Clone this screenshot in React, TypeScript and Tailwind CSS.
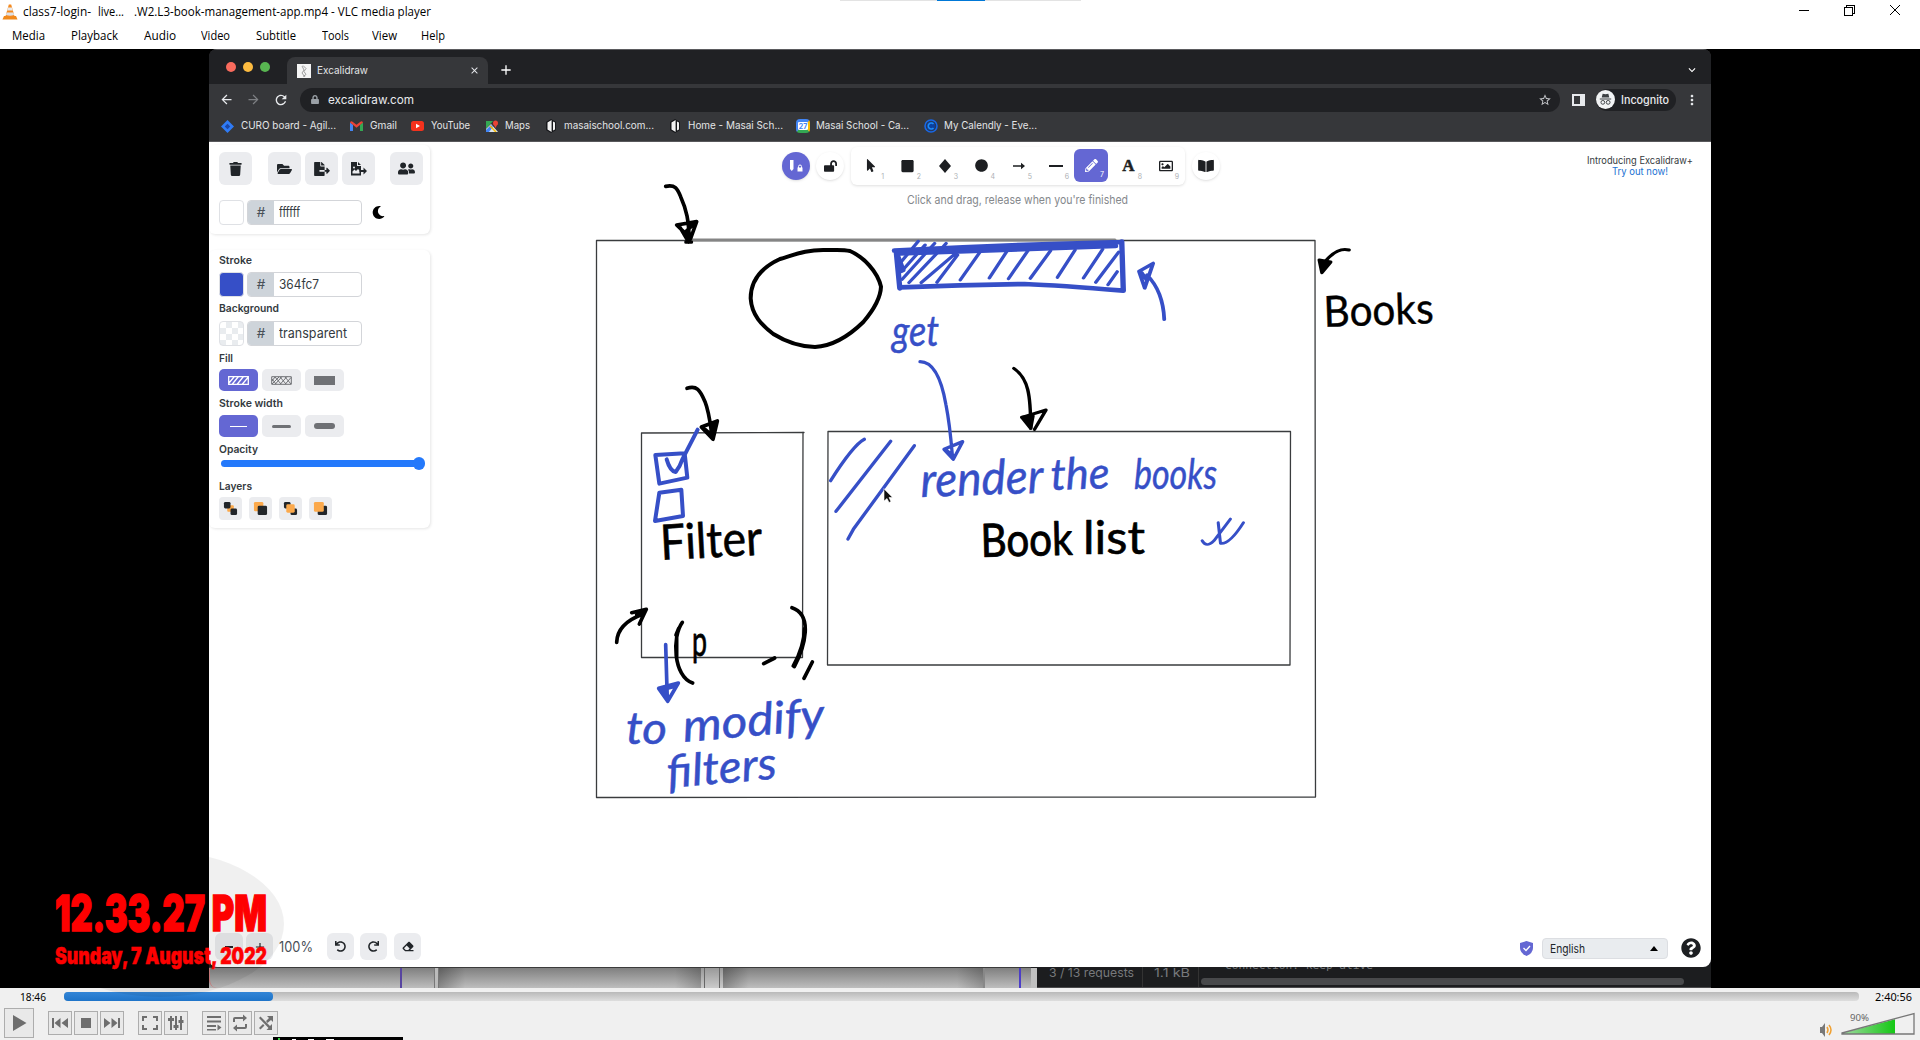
import { useLayoutEffect, useRef, useState, type ReactNode } from "react";
import {
  FaTrash, FaFolderOpen, FaFileExport, FaUserFriends, FaMoon, FaMousePointer, FaSquare, FaCircle,
  FaPencilAlt, FaBookOpen, FaUndo, FaRedo, FaEraser, FaQuestionCircle, FaLock, FaLockOpen, FaRegImage,
} from "react-icons/fa";
import {
  MdArrowBack, MdArrowForward, MdRefresh, MdClose, MdAdd, MdStarBorder, MdExpandMore, MdMoreVert,
} from "react-icons/md";

/* Text squeezed or stretched horizontally so that it fills its box. */
function Fit({ className, children }: { className: string; children: ReactNode }) {
  const box = useRef<HTMLSpanElement>(null);
  const text = useRef<HTMLSpanElement>(null);
  const [scale, setScale] = useState(1);
  useLayoutEffect(() => {
    if (box.current && text.current && text.current.offsetWidth > 0) {
      setScale(box.current.clientWidth / text.current.getBoundingClientRect().width);
    }
  }, []);
  return (
    <span ref={box} className={`block shrink-0 ${className}`}>
      <span ref={text} className="inline-block origin-left whitespace-pre" style={{ transform: `scaleX(${scale})` }}>
        {children}
      </span>
    </span>
  );
}

function Cone() {
  return (
    <svg viewBox="0 0 16 16" className="ml-[2px] h-4 w-4 shrink-0">
      <path d="M2 12h12l1.5 3.5H.5z" fill="#f08a1c" />
      <path d="M6.8.5h2.4l3.3 11.8q-4.5 2-9 0z" fill="#f58a1f" />
      <path d="M6 3.4h4l.8 3H5.200z" fill="#e8eaed" />
      <path d="M4.600 8.500h6.800l.7 2.500q-4 1.500-8.200 0z" fill="#dfe1e5" />
    </svg>
  );
}

function TitleBar() {
  return (
    <header className="relative flex h-6 items-center bg-white text-[12px] leading-4 text-black">
      <Cone />
      <Fit className="ml-[5px] w-[68px]">class7-login-</Fit>
      <Fit className="ml-[7px] w-[26px]">live...</Fit>
      <Fit className="ml-[10px] w-[297px]">.W2.L3-book-management-app.mp4 - VLC media player</Fit>
      <div className="absolute left-[840px] top-0 flex h-px w-[241px] justify-center bg-[#e3e3e3]">
        <div className="h-px w-12 bg-[#0078d7]" />
      </div>
      <svg viewBox="0 0 102 12" className="mb-1 ml-auto mr-[19px] h-3 w-[102px]" fill="none" stroke="#000" shapeRendering="crispEdges">
        <path d="M0 6.5h10M45.500 3.500h8v8h-8zM47.500 3.500v-2h8v8h-2" />
        <path d="M91 1l10 10M101 1l-10 10" shapeRendering="auto" />
      </svg>
    </header>
  );
}

function MenuBar() {
  return (
    <nav className="flex h-[25px] items-center bg-white pb-px pl-3 text-[12px] leading-4 text-black">
      <Fit className="w-[33px]">Media</Fit>
      <Fit className="ml-[26px] w-[47px]">Playback</Fit>
      <Fit className="ml-[26px] w-8">Audio</Fit>
      <Fit className="ml-[25px] w-[29px]">Video</Fit>
      <Fit className="ml-[26px] w-10">Subtitle</Fit>
      <Fit className="ml-[26px] w-[27px]">Tools</Fit>
      <Fit className="ml-[23px] w-[25px]">View</Fit>
      <Fit className="ml-6 w-6">Help</Fit>
    </nav>
  );
}

function TabStrip() {
  return (
    <div className="flex h-[35px] items-end border-t border-[#5b5b5e] bg-[#202124] pl-[17px]">
      <div className="mb-3 flex gap-[7px]">
        <i className="h-[10px] w-[10px] rounded-full bg-[#f96b5d]" />
        <i className="h-[10px] w-[10px] rounded-full bg-[#fcbb40]" />
        <i className="h-[10px] w-[10px] rounded-full bg-[#58b551]" />
      </div>
      <div className="ml-[17px] flex h-[27px] w-[201px] items-center rounded-t-lg bg-[#36373a] pl-[10px]">
        <svg viewBox="0 0 14 14" className="h-[14px] w-[14px]">
          <path d="M0 0h14v14H0z" fill="#f5f5f5" />
          <path d="M6 1.500l3 3-2 3 2 3-3 2M5 2l2 4-2 3 3 4" fill="none" stroke="#8a8a8a" strokeWidth=".8" />
        </svg>
        <Fit className="ml-[6px] w-[51px] text-[10.5px] leading-4 text-[#e4e5e7]">Excalidraw</Fit>
        <MdClose className="ml-auto mr-[8px] h-[11px] w-[11px] text-[#e8eaed]" />
      </div>
      <MdAdd className="mb-[6px] ml-[10px] h-4 w-4 text-white" />
      <MdExpandMore className="mb-[7px] ml-auto mr-[12px] h-[14px] w-[14px] text-white" />
    </div>
  );
}

function AddressBar() {
  return (
    <div className="flex h-[31px] items-center pl-[10px] text-[#e8eaed]">
      <MdArrowBack className="h-[15px] w-[15px]" />
      <MdArrowForward className="ml-3 h-[15px] w-[15px] text-[#7d7f83]" />
      <MdRefresh className="ml-3 h-4 w-4" />
      <div className="ml-[11px] flex h-6 w-[1260px] items-center rounded-full bg-[#202124] pl-[11px]">
        <FaLock className="h-[9px] w-[8px] text-[#9aa0a6]" />
        <Fit className="ml-[9px] w-[86px] text-[12px] leading-4">excalidraw.com</Fit>
        <MdStarBorder className="ml-auto mr-[8px] h-[14px] w-[14px] text-[#c4c6ca]" />
      </div>
      <div className="ml-3 flex h-3 w-[13px] justify-end border-2 border-[#e8eaed]">
        <i className="w-[3px] bg-[#e8eaed]" />
      </div>
      <div className="ml-[11px] flex h-[22px] w-[80px] items-center rounded-full bg-[#202124]">
        <svg viewBox="0 0 20 20" className="h-[19px] w-[19px]">
          <circle cx="10" cy="10" r="10" fill="#f1f3f4" />
          <path d="M4 9h12v1H4zM6 8l1-4 3 .6L13 4l1 4z" fill="#3c4043" />
          <g fill="none" stroke="#3c4043"><circle cx="7.200" cy="13" r="2" /><circle cx="12.800" cy="13" r="2" /></g>
        </svg>
        <Fit className="ml-[6px] w-12 text-[11.5px] font-medium leading-4">Incognito</Fit>
      </div>
      <MdMoreVert className="ml-[8px] h-4 w-4" />
    </div>
  );
}

function Masai() {
  return (
    <svg viewBox="0 0 10 14" className="h-[14px] w-[10px]">
      <path d="M5 0l5 3v8l-5 3-5-3V3z" fill="#16171a" />
      <path d="M5.600 1v12L1.500 10.600V3.400zM7 2.500l2 1.100v6.800L7 11.500z" fill="#f1f1f1" />
    </svg>
  );
}

function Bookmarks() {
  return (
    <div className="flex h-[27px] items-center border-b border-[#58585b] pb-1 pl-[12px] text-[10.5px] leading-4 text-[#e4e5e7]">
      <svg viewBox="0 0 12 12" className="h-[13px] w-[13px]">
        <path d="M6 0l6 6-6 6-6-6z" fill="#2f7bf6" /><path d="M6 3.500L8.500 6 6 8.500 3.500 6z" fill="#1a47a8" />
      </svg>
      <Fit className="ml-[7px] w-[95px]">CURO board - Agil...</Fit>
      <svg viewBox="0 0 13 10" className="ml-[14px] h-[10px] w-[13px]">
        <path d="M0 10V1.500L3 3.800V10z" fill="#4385f3" /><path d="M13 10V1.500L10 3.800V10z" fill="#34a853" />
        <path d="M0 1.500Q1-.5 2.600.700L6.500 3.700 10.400.700Q12-.5 13 1.500L6.500 6.700z" fill="#ea4335" />
      </svg>
      <Fit className="ml-[7px] w-[27px]">Gmail</Fit>
      <svg viewBox="0 0 13 10" className="ml-[14px] h-[10px] w-[13px]">
        <rect width="13" height="10" rx="2.500" fill="#f4321d" /><path d="M5 2.800l4 2.200-4 2.200z" fill="#fff" />
      </svg>
      <Fit className="ml-[7px] w-[39px]">YouTube</Fit>
      <svg viewBox="0 0 12 12" className="ml-[16px] h-3 w-3">
        <path d="M0 1h7L0 9z" fill="#34a853" /><path d="M0 9l5-5 7 8H1z" fill="#dfe6ee" /><path d="M0 10l5-5 2 2-4 5H0z" fill="#4285f4" />
        <path d="M4 6l6 6" stroke="#fbbc04" strokeWidth="1.500" /><circle cx="9.500" cy="3" r="2.500" fill="#ea4335" /><path d="M7.500 4h4l-2 4z" fill="#ea4335" />
      </svg>
      <Fit className="ml-[7px] w-[25px]">Maps</Fit>
      <span className="ml-[16px]"><Masai /></span>
      <Fit className="ml-[8px] w-[90px]">masaischool.com...</Fit>
      <span className="ml-[16px]"><Masai /></span>
      <Fit className="ml-[8px] w-[95px]">Home - Masai Sch...</Fit>
      <span className="ml-[13px] flex h-[14px] w-[14px] shrink-0 items-center justify-center rounded-sm border-x-2 border-b-[3px] border-t-[3px] border-b-[#34a853] border-l-[#4285f4] border-r-[#fbbc04] border-t-[#4285f4] bg-white text-[7px] font-bold leading-none text-[#4285f4]">27</span>
      <Fit className="ml-[6px] w-[93px]">Masai School - Ca...</Fit>
      <svg viewBox="0 0 14 14" className="ml-[15px] h-[14px] w-[14px]" fill="none">
        <circle cx="7" cy="7" r="6" stroke="#1767e8" strokeWidth="1.600" /><circle cx="7" cy="7" r="4.500" fill="#0b3f9e" />
        <path d="M9.500 5a3 3 0 1 0 0 4" stroke="#1d8cf5" strokeWidth="1.500" />
      </svg>
      <Fit className="ml-[6px] w-[93px]">My Calendly - Eve...</Fit>
    </div>
  );
}

function PanelButton({ className, children }: { className: string; children: ReactNode }) {
  return <div className={`flex shrink-0 items-center justify-center bg-[#ebecef] text-[#212529] ${className}`}>{children}</div>;
}

function HexInput({ swatch, value, width }: { swatch: string; value: string; width: string }) {
  return (
    <div className="flex h-[25px] text-[13.5px] leading-[23px]">
      <div className={`h-[25px] w-[25px] rounded border border-[#dfe1e5] ${swatch}`} />
      <div className="ml-[3px] flex w-[115px] overflow-hidden rounded border border-[#d3d5d9]">
        <span className="w-[26px] bg-[#ced4da] text-center text-[#495057]">#</span>
        <Fit className={`ml-[5px] text-[#343a40] ${width}`}>{value}</Fit>
      </div>
    </div>
  );
}

function Layer({ kind }: { kind: number }) {
  return (
    <PanelButton className="h-[23px] w-[23px] rounded">
      <svg viewBox="0 0 16 16" className="h-[15px] w-[15px]">
        {kind === 0 && <><rect x="4.500" y="4.500" width="7" height="7" rx="1" fill="#fba94c" /><rect x="1" y="1" width="7" height="7" rx="1.500" fill="#212529" /><rect x="8" y="8" width="7" height="7" rx="1.500" fill="#212529" /></>}
        {kind === 1 && <><rect x="1" y="1" width="10" height="10" rx="1.500" fill="#fba94c" /><rect x="5" y="5" width="10" height="10" rx="1.500" fill="#212529" /></>}
        {kind === 2 && <><rect x="1" y="1" width="7" height="7" rx="1.500" fill="#212529" /><rect x="8" y="8" width="7" height="7" rx="1.500" fill="#212529" /><rect x="3.500" y="3.500" width="9" height="9" rx="1.500" fill="#fba94c" /></>}
        {kind === 3 && <><rect x="5" y="5" width="10" height="10" rx="1.500" fill="#212529" /><rect x="1" y="1" width="10.500" height="10.500" rx="1.500" fill="#fba94c" /></>}
      </svg>
    </PanelButton>
  );
}

function LeftPanels() {
  return (
    <aside className="w-[221px] pt-[3px] text-[10.5px] font-semibold leading-[14px] text-[#343a40]">
      <section className="h-[89px] rounded-md bg-white pl-[10px] pt-[7px] shadow-[1px_1px_3px_rgba(0,0,0,0.1)]">
        <div className="flex">
          <PanelButton className="h-[33px] w-[33px] rounded-md"><FaTrash className="h-[14px] w-[13px]" /></PanelButton>
          <PanelButton className="ml-4 h-[33px] w-[33px] rounded-md"><FaFolderOpen className="h-[14px] w-[15px]" /></PanelButton>
          <PanelButton className="ml-1 h-[33px] w-[33px] rounded-md"><FaFileExport className="h-[14px] w-4" /></PanelButton>
          <PanelButton className="ml-1 h-[33px] w-[33px] rounded-md">
            <svg viewBox="0 0 16 14" className="h-[14px] w-4">
              <path d="M0 0h6v4h4v9.500H0zM7 0l3 3H7z" fill="#212529" />
              <path d="M1.500 11.500v-2l2-2 1.500 1.500 2-2 1.500 1.500v3z" fill="#ebecef" /><circle cx="3" cy="5.500" r="1" fill="#ebecef" />
              <path d="M8.500 8h4V5.500L16 9l-3.500 3.500V10h-4z" fill="#212529" />
            </svg>
          </PanelButton>
          <PanelButton className="ml-[15px] h-[33px] w-[33px] rounded-md"><FaUserFriends className="h-[15px] w-[17px]" /></PanelButton>
        </div>
        <div className="mt-[15px] flex items-center font-normal">
          <HexInput swatch="bg-white" value="ffffff" width="w-[21px]" />
          <FaMoon className="ml-[10px] h-[13px] w-[13px] text-black" />
        </div>
      </section>
      <section className="mt-4 h-[278px] rounded-md bg-white pl-[10px] pt-[4px] shadow-[1px_1px_3px_rgba(0,0,0,0.1)]">
        <Fit className="w-[33px]">Stroke</Fit>
        <div className="mt-[4px] font-normal"><HexInput swatch="bg-[#364fc7]" value="364fc7" width="w-[40px]" /></div>
        <Fit className="mt-[5px] w-[60px]">Background</Fit>
        <div className="mt-[5px] font-normal">
          <HexInput swatch="bg-[repeating-conic-gradient(#e9ecef_0_25%,#fff_0_50%)] bg-[length:12px_12px]" value="transparent" width="w-[68px]" />
        </div>
        <Fit className="mt-[6px] w-[14px]">Fill</Fit>
        <div className="mt-[3px] flex gap-1">
          <div className="flex h-[22px] w-[39px] items-center justify-center rounded-[5px] bg-[#6467d3]">
            <svg viewBox="0 0 21 9" className="h-[9px] w-[21px]" fill="none" stroke="#fff" strokeWidth="1.300"><path d="M.7.700h19.600v7.600H.7zM1 7l5-6M4 8.500l6.500-8M9 8.500l6.500-8M14 8.500l6-7" /></svg>
          </div>
          <PanelButton className="h-[22px] w-[39px] rounded-[5px]">
            <svg viewBox="0 0 21 9" className="h-[9px] w-[21px]" fill="none" stroke="#6f7175" strokeWidth="1"><path d="M.7.700h19.600v7.600H.7zM1 5l3-4M1 8l7-7M4 8.500l7-8M9 8.500l7-8M14 8.500l6-7M1 3l4 5M4 1l6 7M9 1l6 7M14 1l6 7" /></svg>
          </PanelButton>
          <PanelButton className="h-[22px] w-[39px] rounded-[5px]"><i className="h-[9px] w-[21px] bg-[#6f7175]" /></PanelButton>
        </div>
        <Fit className="mt-[6px] w-16">Stroke width</Fit>
        <div className="mt-1 flex gap-1">
          <div className="flex h-[22px] w-[39px] items-center justify-center rounded-[5px] bg-[#6467d3]"><i className="h-px w-[17px] bg-white" /></div>
          <PanelButton className="h-[22px] w-[39px] rounded-[5px]"><i className="h-[3px] w-[19px] rounded bg-[#6f7175]" /></PanelButton>
          <PanelButton className="h-[22px] w-[39px] rounded-[5px]"><i className="h-[6px] w-[21px] rounded bg-[#6f7175]" /></PanelButton>
        </div>
        <Fit className="mt-[6px] w-[39px]">Opacity</Fit>
        <div className="ml-[2px] flex h-[13px] w-[204px] items-center">
          <i className="h-[7px] flex-1 rounded-l-full bg-[#2479fb]" />
          <i className="-ml-px h-[13px] w-3 rounded-full bg-[#2479fb]" />
        </div>
        <Fit className="mt-[10px] w-[33px]">Layers</Fit>
        <div className="mt-[3px] flex gap-[7px]">
          <Layer kind={0} /><Layer kind={1} /><Layer kind={2} /><Layer kind={3} />
        </div>
      </section>
    </aside>
  );
}

function Tool({ n, children }: { n: string; children: ReactNode }) {
  return (
    <div className="relative flex h-[33px] w-[37px] shrink-0 items-center justify-center text-[#1d1f22]">
      {children}
      <span className="absolute bottom-[2px] right-[5px] text-[7px] leading-none text-[#adb0b5]">{n}</span>
    </div>
  );
}

function ToolBar() {
  return (
    <div className="absolute left-[573px] top-[4px] z-10 flex h-10 items-center">
      <div className="flex h-7 w-7 items-center justify-center rounded-full bg-[#6467d3] text-white shadow">
        <svg viewBox="0 0 16 14" className="h-[14px] w-4" fill="#fff">
          <path d="M2 1h3.500v9L3.750 12 2 10zM9.500 8.500h5v4h-5z" /><path d="M10.500 9V7.500a1.500 1.500 0 0 1 3 0V9" fill="none" stroke="#fff" />
        </svg>
      </div>
      <div className="ml-[6px] flex h-7 w-7 items-center justify-center rounded-full bg-white text-[#1d1f22] shadow-sm">
        <FaLockOpen className="h-3 w-[13px]" />
      </div>
      <div className="mb-px ml-[7px] flex h-[38px] w-[334px] items-center rounded-md bg-white pl-px shadow-[0_1px_3px_rgba(0,0,0,0.13)]">
        <Tool n="1"><FaMousePointer className="h-[13px] w-[10px]" /></Tool>
        <Tool n="2"><FaSquare className="h-[14px] w-[13px]" /></Tool>
        <Tool n="3"><svg viewBox="0 0 12 14" className="h-[14px] w-3"><path d="M6 0l6 7-6 7-6-7z" fill="#1d1f22" /></svg></Tool>
        <Tool n="4"><FaCircle className="h-[13px] w-[13px]" /></Tool>
        <Tool n="5"><svg viewBox="0 0 12 8" className="h-2 w-3"><path d="M0 3.300h8V.8L12 4 8 7.200V4.700H0z" fill="#1d1f22" /></svg></Tool>
        <Tool n="6"><i className="h-[2px] w-[14px] bg-[#1d1f22]" /></Tool>
        <div className="relative mr-[2px] flex h-[33px] w-[34px] shrink-0 items-center justify-center rounded-md bg-[#6467d3] text-white">
          <FaPencilAlt className="h-[13px] w-[13px]" />
          <span className="absolute bottom-[4px] right-1 text-[7px] leading-none">7</span>
        </div>
        <Tool n="8"><span className="font-['Liberation_Serif'] text-[17px] font-bold leading-none [-webkit-text-stroke:0.5px_#1d1f22]">A</span></Tool>
        <Tool n="9"><FaRegImage className="h-[14px] w-[14px]" /></Tool>
      </div>
      <div className="ml-[7px] flex h-7 w-7 items-center justify-center rounded-full bg-white text-[#1d1f22] shadow-sm">
        <FaBookOpen className="h-[14px] w-4" />
      </div>
    </div>
  );
}

function Whiteboard() {
  return (
    <svg viewBox="209 142 1502 825" className="absolute inset-0 h-[825px] w-[1502px]" fill="none" strokeLinecap="round" strokeLinejoin="round">
      {/* wireframe boxes */}
      <g stroke="#3a3c3e" strokeWidth="1.300">
        <path d="M596.500 240.500L1315 240.500L1315.500 797L596.500 797.500Z" />
        <path d="M641.500 433L804 432.500M803 432.500L802.500 657.500L641.500 657.500L641.500 433" />
        <path d="M828 431.500L1290.500 431.500L1290 665L827.500 665Z" />
      </g>
      <path d="M690 240L1115 240" stroke="#858585" strokeWidth="3" />

      {/* logo circle, upper left arrows and checkboxes */}
      <g transform="translate(580 170) scale(.33333)" stroke="#000" strokeWidth="12">
        <path d="M735 240C680 239 650 252 600 267C550 290 512 325 512 385C515 435 545 465 580 492C625 520 665 530 705 531C760 528 810 495 850 456C885 415 902 380 903 350C893 305 850 260 810 243C785 237 755 241 735 240Z" />
        <path d="M257 49C285 43 292 55 302 80C320 120 326 150 328 212M290 165L350 155L332 205ZM300 172L326 216M338 165L318 185M318 216H334" strokeWidth="11" />
        <path d="M321 655C350 645 360 660 375 695C388 728 390 755 397 805M364 771L412 753L399 808ZM375 778L397 797L402 765" strokeWidth="11" />
        <g stroke="#364fc7" strokeWidth="12">
          <path d="M226 855L314 850L322 923L238 941ZM260 868Q270 903 287 906Q300 890 307 868L353 779" />
          <path d="M238 968L304 959L309 1038L225 1053ZM304 959L309 1038" />
          <path d="M853 808Q820 825 752 932M932 814L768 1024M1003 827L820 1078L804 1107" strokeWidth="10" />
          <path d="M1020 575C1060 575 1085 630 1098 705C1110 765 1114 820 1118 866M1092 838L1148 815L1120 868ZM1100 842L1122 858" strokeWidth="10" />
        </g>
      </g>
      <path d="M884 489v12l3-2.500 2 4 2-1-2-4h3.500z" fill="#111" stroke="#fff" strokeWidth=".6" />

      {/* search bar with hatching */}
      <g transform="translate(860 220) scale(.3827 .33333)" stroke="#364fc7" strokeWidth="14">
        <path d="M105 202Q270 194 430 192Q520 196 688 212L684 65M95 98L104 205M99 110L112 150M90 92Q380 74 684 66M105 100Q380 88 668 78" />
        <path d="M108 125L152 64M108 155L170 75M110 178L195 70M128 188L205 95M160 188L255 95M201 187L255 105M262 180L316 92M338 174L386 90M388 176L440 90M445 175L498 92M516 172L562 90M584 174L634 88M616 187L676 96M648 194L672 155M225 70L210 90" strokeWidth="9" />
        <path d="M795 298C793 245 780 200 750 165M729 154L766 130L744 204ZM736 158L750 182" strokeWidth="10" />
        <path d="M894 962Q905 985 925 962L968 897M936 908Q940 950 942 970Q965 975 1002 908" strokeWidth="8" />
      </g>
      <g transform="translate(860 220) scale(.3827 .33333)" stroke="#000" strokeWidth="9">
        <path d="M1278 90Q1248 80 1215 125" />
        <path d="M1200 120L1230 126L1207 158Z" fill="#000" />
        <path d="M402 445C440 475 446 525 446 625M423 592L486 570L456 628" />
        <path d="M423 592L452 588L446 625Z" fill="#000" />
      </g>

      {/* lower left marks */}
      <g transform="translate(580 500) scale(.33333)" stroke="#000" strokeWidth="11">
        <path d="M110 427Q112 370 190 342M155 338L199 328L178 372M170 345L190 335" />
        <path d="M307 367C275 410 280 530 338 549M288 405L296 385M290 400V470" />
        <path d="M636 323C700 345 675 440 643 500M674 385Q672 440 640 498M551 491L584 474M697 486L672 535" />
        <path d="M257 434L262 600M236 565L295 549L263 604ZM245 570L265 590M250 568L280 560" stroke="#364fc7" />
      </g>

      {/* handwritten labels */}
      <g fontFamily="Lato, sans-serif" fontWeight="400" fill="#000" stroke="#000" strokeWidth=".4">
        <text x="1324" y="327" fontSize="43" textLength="110" lengthAdjust="spacingAndGlyphs" transform="rotate(-2 1324 327)">Books</text>
        <text x="981" y="557" fontSize="46" textLength="92" lengthAdjust="spacingAndGlyphs" transform="rotate(-1.500 981 557)" strokeWidth=".9">Book</text>
        <text x="1083" y="554" fontSize="46" textLength="62" lengthAdjust="spacingAndGlyphs" strokeWidth=".6">list</text>
        <text x="661" y="560" fontSize="49" textLength="102" lengthAdjust="spacingAndGlyphs" transform="rotate(-3 661 560)" strokeWidth=".6">Filter</text>
        <text x="692" y="656" fontSize="43" textLength="15" lengthAdjust="spacingAndGlyphs" strokeWidth=".8">p</text>
      </g>
      <g fontFamily="Lato, sans-serif" fontStyle="italic" fontWeight="400" fill="#364fc7" stroke="#364fc7" strokeWidth=".5">
        <text x="892" y="346" fontSize="43" textLength="47" lengthAdjust="spacingAndGlyphs">get</text>
        <text x="921" y="497" fontSize="48" textLength="123" lengthAdjust="spacingAndGlyphs" transform="rotate(-2 921 497)">render</text>
        <text x="1051" y="490" fontSize="44" textLength="59" lengthAdjust="spacingAndGlyphs" transform="rotate(-2 1051 490)">the</text>
        <text x="1134" y="489" fontSize="42" textLength="83" lengthAdjust="spacingAndGlyphs">books</text>
        <text x="626" y="744" fontSize="44" textLength="41" lengthAdjust="spacingAndGlyphs">to</text>
        <text x="684" y="742" fontSize="45" textLength="142" lengthAdjust="spacingAndGlyphs" transform="rotate(-5 684 742)">modify</text>
        <text x="668" y="788" fontSize="45" textLength="110" lengthAdjust="spacingAndGlyphs" transform="rotate(-5 668 788)">filters</text>
      </g>
    </svg>
  );
}

function CanvasFooter() {
  return (
    <div className="absolute bottom-0 left-0 flex h-[34px] w-full items-start pl-[6px]">
      <PanelButton className="h-[27px] w-7 rounded-md"><i className="h-[2px] w-2 bg-[#212529]" /></PanelButton>
      <PanelButton className="ml-[3px] h-[27px] w-[27px] rounded-md"><MdAdd className="h-[14px] w-[14px]" /></PanelButton>
      <Fit className="ml-[6px] w-[34px] text-[14px] leading-[27px] text-[#495057]">100%</Fit>
      <PanelButton className="ml-[14px] h-[27px] w-[27px] rounded-md"><FaUndo className="h-[11px] w-[11px]" /></PanelButton>
      <PanelButton className="ml-[6px] h-[27px] w-[27px] rounded-md"><FaRedo className="h-[11px] w-[11px]" /></PanelButton>
      <PanelButton className="ml-[7px] h-[27px] w-[27px] rounded-md"><FaEraser className="h-[11px] w-[12px]" /></PanelButton>
      <svg viewBox="0 0 13 15" className="ml-auto mt-[8px] h-[15px] w-[13px]">
        <path d="M6.500 0L13 2v5q0 5-6.500 8Q0 12 0 7V2z" fill="#6467d3" /><path d="M3.500 7l2.500 2.500L10 5" fill="none" stroke="#fff" strokeWidth="1.300" />
      </svg>
      <div className="ml-[9px] mt-[5px] flex h-[21px] w-[126px] items-center rounded border border-[#dcdee2] bg-[#e9ecef] pl-[7px] text-[11.5px] leading-4 text-[#212529]">
        <Fit className="w-[35px]">English</Fit>
        <svg viewBox="0 0 8 5" className="ml-auto mr-[9px] h-[5px] w-[8px]"><path d="M0 5l4-5 4 5z" fill="#000" /></svg>
      </div>
      <FaQuestionCircle className="ml-[13px] mr-[10px] mt-[5px] h-5 w-5 text-[#1d1f22]" />
    </div>
  );
}

function Canvas() {
  return (
    <main className="relative h-[825px] rounded-b-lg bg-white">
      <LeftPanels />
      <Whiteboard />
      <ToolBar />
      <Fit className="absolute left-[698px] top-[49px] w-[221px] text-[12px] leading-[18px] text-[#85888c]">Click and drag, release when you're finished</Fit>
      <div className="absolute right-[18px] top-[12px] flex w-[106px] flex-col items-center text-[10px] leading-[12px] text-[#343a40]">
        <Fit className="w-[106px]">Introducing Excalidraw+</Fit>
        <Fit className="-mt-px w-[56px] text-[#1971d2]">Try out now!</Fit>
      </div>
      <CanvasFooter />
    </main>
  );
}

/* Strip of the windows lying behind the browser. */
function BackgroundWindows() {
  return (
    <div className="absolute inset-x-0 bottom-0 flex h-8 items-end bg-[#1c1d1f]">
      <div className="flex h-[21px] w-[822px] border-t border-[#3b3b3b] bg-gradient-to-b from-[#808080] to-[#bebebe]">
        <div className="w-[191px] rounded-bl-lg border-l border-[#d08080]" />
        <div className="w-[34px] border-l-2 border-[#5845a0]" />
        <div className="w-[5px] border-x border-[#777] bg-[#bbb]" />
        <div className="w-[262px] bg-[linear-gradient(90deg,#0004,#0000_10%,#0000_90%,#0003)]" />
        <div className="flex w-[22px] justify-between bg-white/20 px-[3px]"><i className="w-px bg-[#666]" /><i className="w-px bg-[#666]" /></div>
        <div className="w-[260px] bg-[linear-gradient(90deg,#0004,#0000_10%,#0000_90%,#0003)]" />
        <div className="w-[38px] border-x-2 border-l-[#888] border-r-[#4c3ec8]" />
      </div>
      <i className="h-[20px] w-[6px] bg-[#c0c0c0]" />
      <div className="flex h-[21px] flex-1 overflow-hidden border-b border-[#4a4a4c] text-[#77797c]">
        <Fit className="ml-3 w-[85px] text-[12px] leading-[11px]">3 / 13 requests</Fit>
        <i className="ml-2 h-full w-px bg-[#333]" />
        <Fit className="ml-[11px] w-[36px] text-[12px] leading-[11px]">1.1 kB</Fit>
        <div className="ml-2 w-[510px] border-l border-[#333] pl-[2px]">
          <div className="h-[11px] overflow-hidden pl-[24px] font-['DejaVu_Sans_Mono',monospace] text-[11px] leading-4">
            <Fit className="-mt-[9px] w-[148px]">Connection: keep-alive</Fit>
          </div>
          <i className="block h-[7px] w-[483px] rounded bg-[#48494b]" />
        </div>
      </div>
    </div>
  );
}

function Video() {
  return (
    <div className="relative flex h-[939px] justify-center bg-black">
      <div className="relative w-[1502px] overflow-hidden rounded-t-lg font-['Inter',sans-serif]">
        <BackgroundWindows />
        <div className="relative rounded-b-lg bg-[#36373a]">
          <TabStrip />
          <AddressBar />
          <Bookmarks />
          <Canvas />
        </div>
      </div>
    </div>
  );
}

function Control({ className, children }: { className: string; children: ReactNode }) {
  return (
    <button className={`flex items-center justify-center border border-[#adadad] bg-[#e9e9e9] ${className}`}>
      <svg viewBox="0 0 18 18" className="h-[18px] w-[18px]" fill="#6e6e6e" stroke="none">{children}</svg>
    </button>
  );
}

function Controls() {
  return (
    <footer className="h-[52px] bg-[#f0f0f0] font-['Noto_Sans',sans-serif] text-[11px] text-black">
      <div className="flex h-5 items-start">
        <Fit className="ml-5 mt-px w-[26px] leading-4">18:46</Fit>
        <div className="ml-[18px] mt-1 h-[9px] w-[1795px] rounded bg-gradient-to-b from-[#b9b9b9] to-[#dedede]">
          <div className="h-[9px] w-[209px] rounded bg-gradient-to-b from-[#3285d6] to-[#1e74c9]" />
        </div>
        <Fit className="ml-4 mt-px w-[37px] leading-4">2:40:56</Fit>
      </div>
      <div className="flex h-8 items-center pb-[2px]">
        <Control className="ml-1 h-[30px] w-[30px]"><path d="M3 1l13.500 8L3 17z" /></Control>
        <Control className="ml-[14px] h-6 w-6"><path d="M1 4h2v10H1zM9.500 4v10L3.500 9zM17 4v10l-6.500-5z" /></Control>
        <Control className="ml-[2px] h-6 w-6"><path d="M4 4h10v10H4z" /></Control>
        <Control className="ml-[2px] h-6 w-6"><path d="M17 4h-2v10h2zM8.500 4v10l6-5zM1 4v10l6.500-5z" /></Control>
        <Control className="ml-[14px] h-6 w-6"><path d="M1 2h5v2H3v3H1zM17 2h-5v2h3v3h2zM1 16h5v-2H3v-3H1zM17 16h-5v-2h3v-3h2z" /></Control>
        <Control className="ml-[2px] h-6 w-6"><path d="M3 2h2v14H3zM8 2h2v14H8zM13 2h2v14h-2zM1 4h6v3H1zM6.500 11h5v3h-5zM11.500 6h5v3h-5z" /></Control>
        <Control className="ml-[14px] h-6 w-6"><path d="M2 2h14v2H2zM2 6.500h14v2H2zM2 11h9v2H2zM2 15h9v1.500H2zM12.500 10.500l4 3-4 3z" /></Control>
        <Control className="ml-[2px] h-6 w-6"><path d="M2 8V5q0-2 2-2h8V.5L16 4l-4 3.500V5H4v3zM16 10v3q0 2-2 2H6v2.500L2 14l4-3.500V13h8v-3z" /></Control>
        <Control className="ml-[2px] h-6 w-6"><path d="M2 4l1.500-1.500 9.500 9.500 2-2v6H9.500l2-2zM2 14l4-4 1.500 1.500-4 4zM9 7l3-3-2-2h6v6l-2-2-3.500 3z" /></Control>
        <svg viewBox="0 0 16 16" className="ml-auto mt-[14px] h-4 w-4" fill="none" stroke="#f0a030" strokeWidth="1.500">
          <path d="M2 5h2l3-4v14l-3-4H2z" fill="#777" stroke="none" /><path d="M9 5q2 3 0 6M11 3q4 5 0 10" />
        </svg>
        <div className="relative ml-[7px] mr-[5px] h-[24px] w-[74px]">
          <svg viewBox="0 0 74 24" className="h-6 w-[74px]">
            <defs><linearGradient id="volume"><stop offset="0" stopColor="#9fd89f" /><stop offset="1" stopColor="#14c814" /></linearGradient></defs>
            <path d="M2 22L54 8.200V23H2z" fill="url(#volume)" /><path d="M1 22L73 2.500V23H1z" fill="none" stroke="#777" strokeWidth="1.300" />
          </svg>
          <Fit className="absolute left-[9px] top-px w-[19px] text-[9.500px] leading-[12px] text-[#666]">90%</Fit>
        </div>
      </div>
    </footer>
  );
}

/* Desktop clock widget that floats over the player. */
function ClockOverlay() {
  return (
    <div className="absolute left-9 top-[851px] h-[146px] w-[248px] rounded-[50%] bg-black/[0.06] pl-[19px] pt-[33px] font-['Inter',sans-serif] font-black text-[#fe0000]">
      <Fit className="w-[212px] text-[49px] leading-[60px] [-webkit-text-stroke:1.5px_#fe0000]">12.33.27 PM</Fit>
      <Fit className="w-[212px] text-[23px] leading-[24px] [-webkit-text-stroke:0.5px_#fe0000]">Sunday, 7 August, 2022</Fit>
    </div>
  );
}

/* Corner of another window that peeks in at the bottom edge. */
function PeekingWindow() {
  return (
    <div className="absolute left-[273px] top-[1037px] flex h-[3px] w-[130px] items-end gap-3 overflow-hidden bg-black pl-[5px]">
      <i className="h-[2px] w-[2px] bg-[#35d045]" />
      <i className="h-px w-1 bg-white" />
      <i className="h-px w-[6px] bg-white" />
      <i className="h-px w-2 bg-white" />
    </div>
  );
}

export default function App() {
  return (
    <div className="relative h-[1040px] w-[1920px] overflow-hidden bg-white font-['Open_Sans',sans-serif]">
      <TitleBar />
      <MenuBar />
      <Video />
      <Controls />
      <ClockOverlay />
      <PeekingWindow />
    </div>
  );
}
